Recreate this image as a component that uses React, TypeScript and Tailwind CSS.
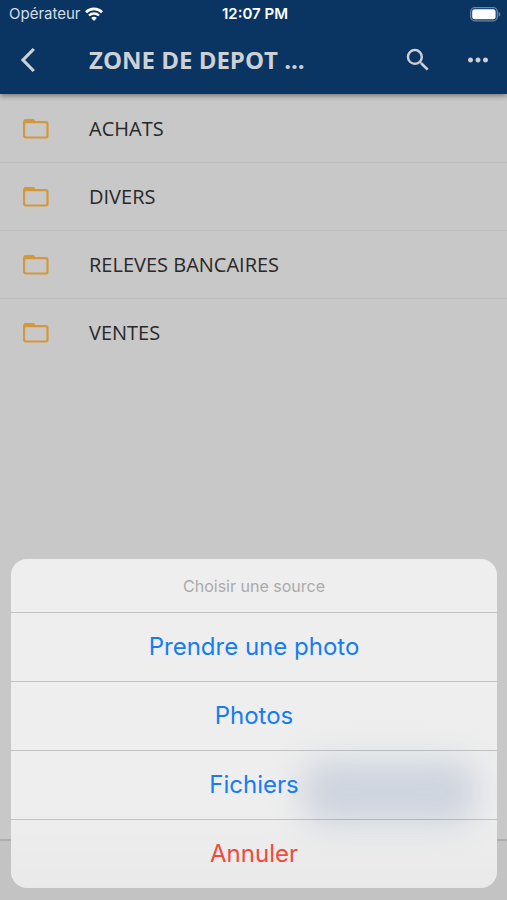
import clsx from "clsx";
import { MdMoreHoriz, MdSearch } from "react-icons/md";

const FOLDERS = ["ACHATS", "DIVERS", "RELEVES BANCAIRES", "VENTES"];

const SOURCES = [
  { label: "Prendre une photo" },
  { label: "Photos" },
  { label: "Fichiers" },
  { label: "Annuler", destructive: true },
];

function WifiIcon() {
  return (
    <svg viewBox="0 0 18 14" className="h-[14px] w-[18px]" fill="none">
      <path d="M1 5.2a11.5 11.5 0 0 1 16 0" stroke="white" strokeWidth="2.7" />
      <path d="M4 8.5a7.2 7.2 0 0 1 10 0" stroke="white" strokeWidth="2.4" />
      <path d="M9 14 6.2 11.1a4 4 0 0 1 5.6 0Z" fill="white" />
    </svg>
  );
}

function BatteryIcon() {
  return (
    <svg viewBox="0 0 31 15" className="h-[15px] w-[31px]" fill="none">
      <rect x="0.7" y="0.7" width="26.6" height="13.1" rx="4" stroke="#6b86a8" strokeWidth="1.3" />
      <rect x="2.2" y="2.2" width="23.4" height="10.1" rx="2.4" fill="white" />
      <path d="M28.7 5v4.6c1-.4 1.6-1.2 1.6-2.3S29.7 5.4 28.7 5Z" fill="#6b86a8" />
    </svg>
  );
}

function FolderIcon() {
  return (
    <svg viewBox="0 0 26 21" className="h-[21px] w-[26px] shrink-0" fill="none">
      <path
        d="M1.100 3.200V17.500a2 2 0 0 0 2 2H22.500a2 2 0 0 0 2-2V6.200a2 2 0 0 0-2-2H12L10.200 2H3a2 2 0 0 0-1.900 1.500Z"
        stroke="#d4983c"
        strokeWidth="2.2"
      />
      <path d="M1 5.200V3a2 2 0 0 1 2-2h7.500L13 4.500 12 5.200Z" fill="#d4983c" />
    </svg>
  );
}

function StatusBar() {
  return (
    <div className="grid h-7 grid-cols-3 items-center pr-1.5 pl-[9px] font-['Inter',sans-serif] text-[15px] text-white">
      <div className="flex items-center gap-1">
        <span className="text-[#d5deea]">Opérateur</span>
        <WifiIcon />
      </div>
      <span className="text-center font-semibold">12:07 PM</span>
      <div className="flex justify-end">
        <BatteryIcon />
      </div>
    </div>
  );
}

function Header() {
  return (
    <header className="z-10 bg-[#0a3562] text-[#cdd0d4] shadow-[0_2px_5px_rgba(0,0,0,0.4)]">
      <StatusBar />
      <div className="flex h-[66px] items-center pr-3.5 pb-0.5 pl-5">
        <button type="button" aria-label="Retour" className="w-[69px] shrink-0">
          <svg viewBox="0 0 16 26" className="h-[26px] w-4" fill="none">
            <path d="M13.8 2 3 13l10.8 11" stroke="currentColor" strokeWidth="3.2" />
          </svg>
        </button>
        <h1 className="flex-1 truncate text-2xl font-bold">ZONE DE DEPOT ...</h1>
        <button type="button" aria-label="Rechercher">
          <MdSearch className="size-[30px]" />
        </button>
        <button type="button" aria-label="Plus d'options" className="ml-[30px]">
          <MdMoreHoriz className="size-[30px]" />
        </button>
      </div>
    </header>
  );
}

function ActionSheet() {
  return (
    <div className="absolute inset-x-0 bottom-0 pr-[10px] pb-3 pl-[11px]">
      <div
        role="dialog"
        aria-labelledby="sheet-title"
        className="relative overflow-hidden rounded-2xl bg-[#eeeeee] text-center font-['Inter',sans-serif]"
      >
        <div className="absolute right-5 bottom-16 h-16 w-44 rounded-3xl bg-[#ced4de] blur-[16px]" />
        <div className="absolute inset-x-0 bottom-0 h-20 bg-linear-to-t from-black/2 to-transparent" />
        <h2
          id="sheet-title"
          className="relative flex h-[53px] items-center justify-center text-base text-[#aaaaaa]"
        >
          Choisir une source
        </h2>
        {SOURCES.map(({ label, destructive }) => (
          <button
            key={label}
            type="button"
            className={clsx(
              "relative block h-[69px] w-full border-t border-black/18 text-2xl",
              destructive ? "text-[#f04a3e]" : "text-[#167cf3]",
            )}
          >
            {label}
          </button>
        ))}
      </div>
    </div>
  );
}

export default function App() {
  return (
    <div className="relative flex min-h-screen flex-col bg-[#c8c8c8] font-['Open_Sans',sans-serif]">
      <Header />
      <main className="flex-1">
        <ul className="pt-px">
          {FOLDERS.map((name) => (
            <li key={name} className="border-b border-[#bfbfbf] last:border-b-0">
              <a href="#" className="flex h-[67px] items-center gap-10 pl-[23px] text-xl text-[#292929]">
                <FolderIcon />
                {name}
              </a>
            </li>
          ))}
        </ul>
      </main>
      <footer className="h-[61px] border-t-2 border-[#adadad] bg-[#c3c3c3]" />
      <ActionSheet />
    </div>
  );
}
